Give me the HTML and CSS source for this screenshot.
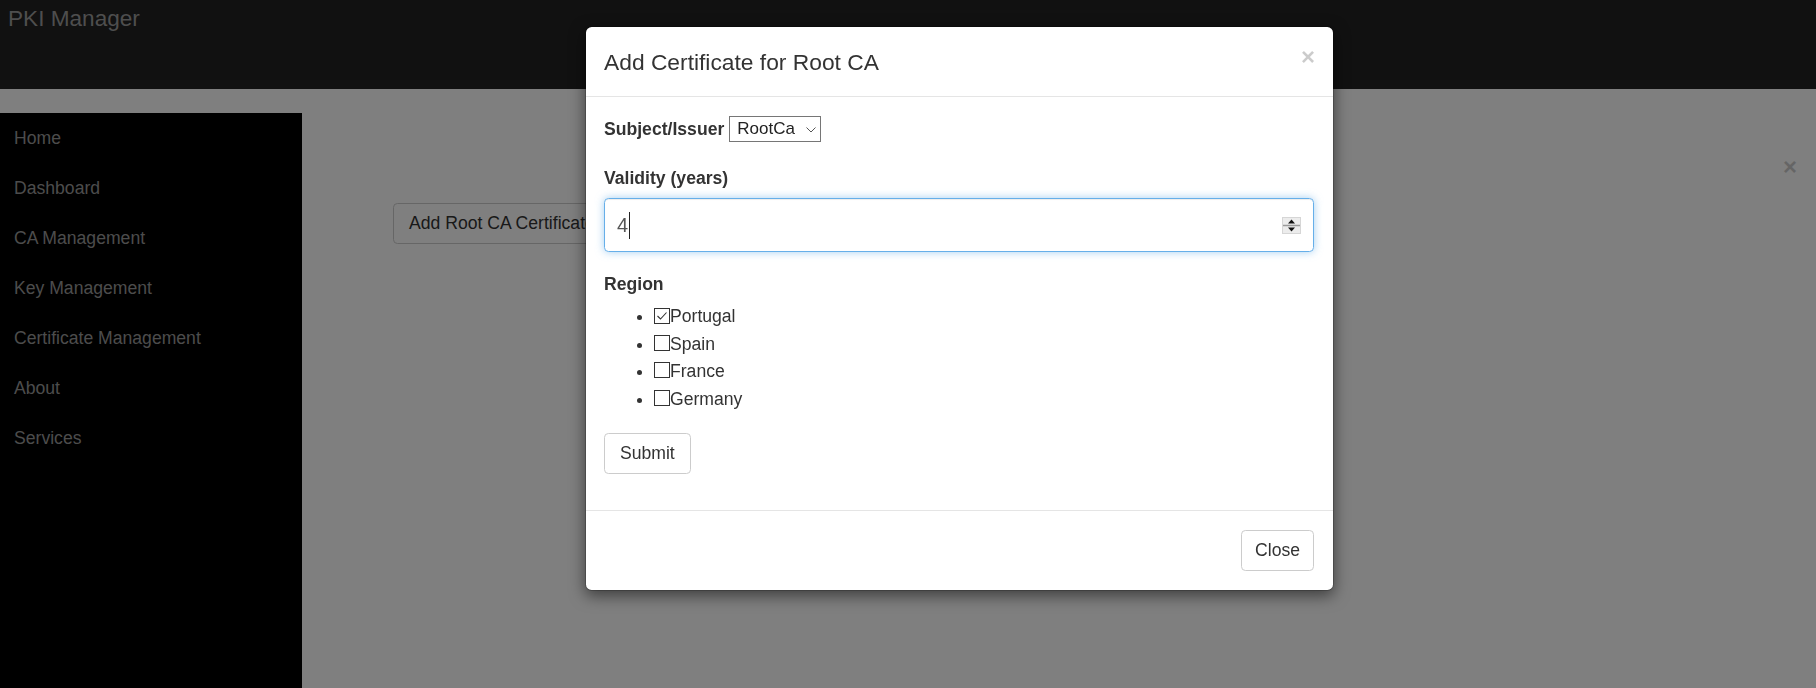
FILE: index.html
```html
<!DOCTYPE html>
<html lang="en">
<head>
<meta charset="utf-8">
<title>PKI Manager</title>
<link rel="stylesheet" href="styles.css">
</head>
<body>
<header class="navbar">
  <span class="brand">PKI Manager</span>
</header>
<div class="layout">
  <nav class="sidebar">
    <a class="nav-item">Home</a>
    <a class="nav-item">Dashboard</a>
    <a class="nav-item">CA Management</a>
    <a class="nav-item">Key Management</a>
    <a class="nav-item">Certificate Management</a>
    <a class="nav-item">About</a>
    <a class="nav-item">Services</a>
  </nav>
  <main class="main">
    <div class="alert-row"><span class="page-close">&times;</span></div>
    <div class="actions">
      <button class="btn btn-wide">Add Root CA Certificate</button>
    </div>
  </main>
</div>

<div class="backdrop"></div>

<div class="modal">
  <div class="modal-header">
    <h4 class="modal-title">Add Certificate for Root CA</h4>
    <span class="modal-close">&times;</span>
  </div>
  <div class="modal-body">
    <div class="field-row">
      <span class="label">Subject/Issuer</span>
      <span class="select">RootCa
        <svg class="chev" width="10" height="6" viewBox="0 0 10 6"><polyline points="0.5,0.5 5,5 9.5,0.5" fill="none" stroke="#555" stroke-width="1"/></svg>
      </span>
    </div>
    <label class="label block">Validity (years)</label>
    <div class="input">
      <span class="value">4</span><span class="caret"></span>
      <svg class="spin" width="19" height="17" viewBox="0 0 19 17">
        <rect x="0.5" y="0.5" width="18" height="16" fill="#ececec" stroke="#d6d6d6"/>
        <line x1="1" y1="8.5" x2="18" y2="8.5" stroke="#9a9a9a" stroke-width="1.5"/>
        <polygon points="9.5,2.5 13,6.5 6,6.5" fill="#111"/>
        <polygon points="6,10.5 13,10.5 9.5,14.5" fill="#111"/>
      </svg>
    </div>
    <label class="label block region">Region</label>
    <ul class="regions">
      <li><span class="box"><svg width="14" height="14" viewBox="0 0 14 14"><polyline points="2.5,7 5.5,10 11.5,3.5" fill="none" stroke="#333" stroke-width="1.1"/></svg></span>Portugal</li>
      <li><span class="box"></span>Spain</li>
      <li><span class="box"></span>France</li>
      <li><span class="box"></span>Germany</li>
    </ul>
    <div class="submit-row">
      <button class="btn btn-wide">Submit</button>
    </div>
  </div>
  <div class="modal-footer">
    <button class="btn">Close</button>
  </div>
</div>
</body>
</html>
```
FILE: styles.css
```css
* { box-sizing: border-box; }

html, body {
  margin: 0;
  height: 100%;
}

body {
  font-family: "Liberation Sans", Arial, sans-serif;
  font-size: 17.6px;
  color: #333;
  background: #fff;
  overflow: hidden;
}

.navbar {
  height: 89px;
  background: #222;
  padding: 4px 8px;
}

.brand {
  display: block;
  font-size: 22.6px;
  line-height: 30px;
  color: #9d9d9d;
}

.layout {
  display: flex;
  margin-top: 24px;
  height: 575px;
}

.sidebar {
  width: 302px;
  flex: none;
  background: #000;
  display: flex;
  flex-direction: column;
}

.nav-item {
  display: block;
  line-height: 50px;
  padding-left: 14px;
  color: #999;
  font-size: 17.6px;
  text-decoration: none;
}

.main {
  flex: 1;
  display: flex;
  flex-direction: column;
}

.alert-row {
  display: flex;
  justify-content: flex-end;
  padding-right: 19px;
  margin-top: 42px;
}

.page-close {
  font-size: 24px;
  font-weight: bold;
  line-height: 24px;
  color: #000;
  opacity: 0.2;
}

.actions {
  margin-top: 24px;
  padding-left: 91px;
}

.btn {
  font-family: "Liberation Sans", Arial, sans-serif;
  font-size: 17.6px;
  line-height: 25px;
  padding: 7px 13px;
  color: #333;
  background: #fff;
  border: 1px solid #ccc;
  border-radius: 4.4px;
}

.btn-wide {
  padding-left: 15px;
  padding-right: 15px;
}

.backdrop {
  position: fixed;
  inset: 0;
  background: rgba(0, 0, 0, 0.5);
  z-index: 1040;
}

.modal {
  position: absolute;
  top: 26px;
  left: 585px;
  width: 749px;
  background: #fff;
  border: 1px solid rgba(0, 0, 0, 0.2);
  border-radius: 6.6px;
  box-shadow: 0 5px 15px rgba(0, 0, 0, 0.5);
  background-clip: padding-box;
  z-index: 1050;
}

.modal-header {
  display: flex;
  justify-content: space-between;
  align-items: flex-start;
  padding: 18px 18px 17px 18px;
  border-bottom: 1px solid #e5e5e5;
}

.modal-title {
  margin: 0;
  font-size: 22.8px;
  font-weight: normal;
  line-height: 34px;
  color: #333;
}

.modal-close {
  font-size: 24px;
  font-weight: bold;
  line-height: 24px;
  margin-top: 0;
  color: #000;
  opacity: 0.2;
}

.modal-body {
  padding: 17px 19px 17px 18px;
}

.field-row {
  display: flex;
  align-items: center;
  height: 30px;
  margin-bottom: 22px;
}

.label {
  font-weight: bold;
  font-size: 17.6px;
  color: #333;
}

.label.block {
  display: block;
  line-height: 25px;
  margin-bottom: 7px;
}

.label.region {
  margin-bottom: 6px;
}

.select {
  display: inline-flex;
  align-items: center;
  justify-content: space-between;
  margin-left: 5px;
  width: 92px;
  height: 26px;
  padding: 0 4px 0 7px;
  border: 1px solid #767676;
  font-size: 17px;
  color: #222;
  background: #fff;
}

.chev { margin-top: 1px; }

.input {
  display: flex;
  align-items: center;
  height: 54px;
  padding: 0 12px 0 12px;
  border: 1px solid #66afe9;
  border-radius: 4.4px;
  box-shadow: inset 0 1px 1px rgba(0, 0, 0, 0.075), 0 0 8px rgba(102, 175, 233, 0.6);
  font-size: 20px;
  color: #555;
  margin-bottom: 20px;
}

.caret {
  display: inline-block;
  width: 1px;
  height: 27px;
  background: #222;
  margin-left: 1px;
}

.spin {
  margin-left: auto;
  margin-top: 1px;
}

.regions {
  margin: 0 0 20px 0;
  padding-left: 50px;
  list-style: disc;
}

.regions li {
  line-height: 27.5px;
  font-size: 17.6px;
  color: #333;
}

.box {
  display: inline-flex;
  align-items: center;
  justify-content: center;
  width: 16px;
  height: 16px;
  border: 1px solid #333;
  margin-left: 0;
  margin-right: 0;
  vertical-align: -1px;
  background: #fff;
}

.submit-row {
  margin-bottom: 19px;
}

.modal-footer {
  display: flex;
  justify-content: flex-end;
  padding: 19px 19px 19px 17px;
  border-top: 1px solid #e5e5e5;
}
```
